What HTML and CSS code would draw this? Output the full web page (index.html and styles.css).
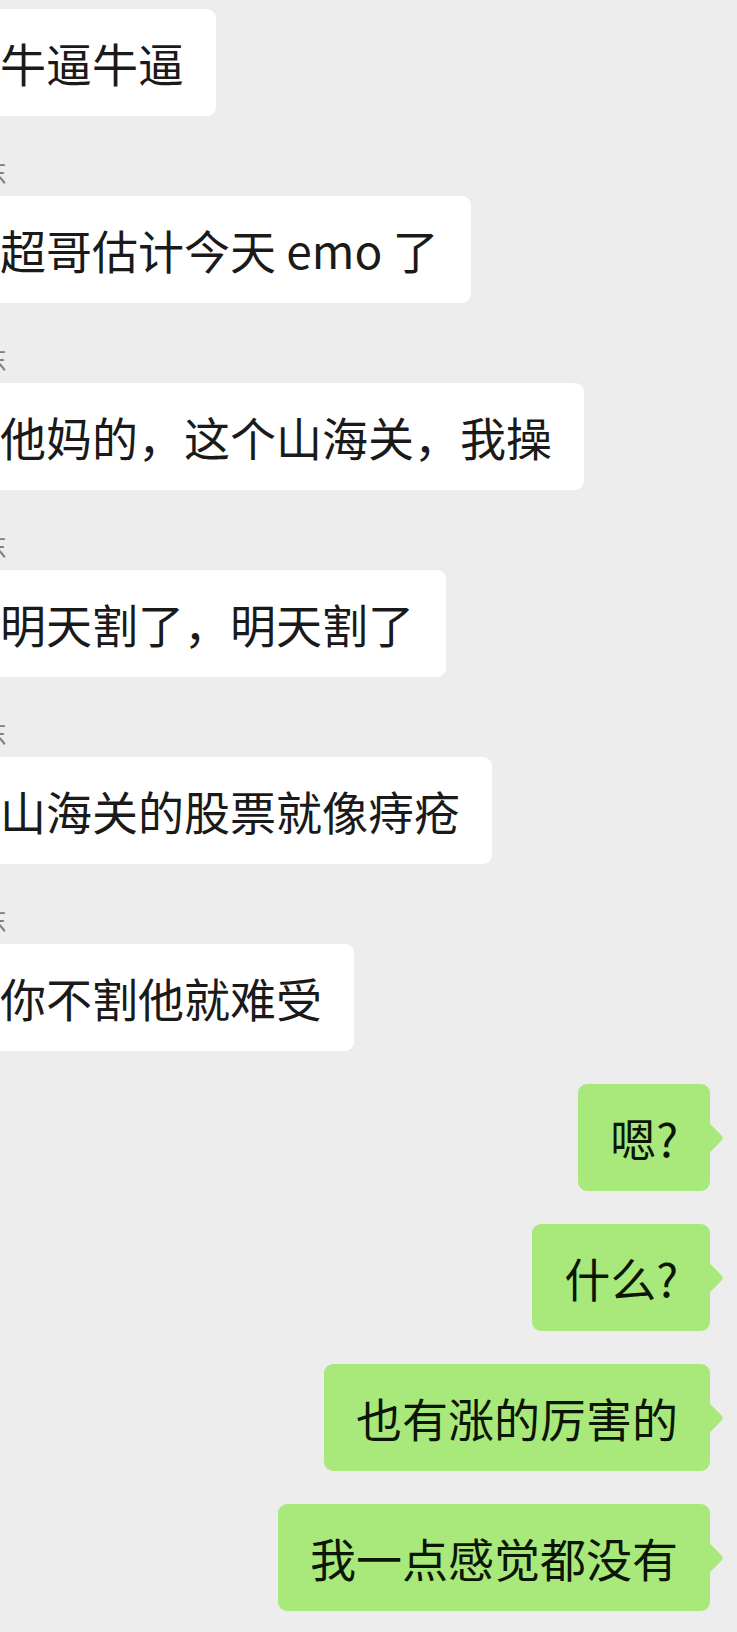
FILE: index.html
```html
<!DOCTYPE html>
<html lang="zh">
<head>
<meta charset="utf-8">
<title>聊天</title>
<link rel="stylesheet" href="styles.css">
</head>
<body>
<main class="chat">
  <div class="msg msg-in first">
    <div class="bubble bubble-in">牛逼牛逼</div>
  </div>
  <div class="msg msg-in">
    <div class="name">东</div>
    <div class="bubble bubble-in">超哥估计今天 emo 了</div>
  </div>
  <div class="msg msg-in">
    <div class="name">东</div>
    <div class="bubble bubble-in">他妈的，这个山海关，我操</div>
  </div>
  <div class="msg msg-in">
    <div class="name">东</div>
    <div class="bubble bubble-in">明天割了，明天割了</div>
  </div>
  <div class="msg msg-in">
    <div class="name">东</div>
    <div class="bubble bubble-in">山海关的股票就像痔疮</div>
  </div>
  <div class="msg msg-in">
    <div class="name">东</div>
    <div class="bubble bubble-in">你不割他就难受</div>
  </div>
  <div class="outgoing">
    <div class="bubble bubble-out">嗯?</div>
    <div class="bubble bubble-out">什么?</div>
    <div class="bubble bubble-out">也有涨的厉害的</div>
    <div class="bubble bubble-out">我一点感觉都没有</div>
  </div>
</main>
</body>
</html>
```

FILE: styles.css
```css
html, body {
  margin: 0;
  padding: 0;
  background: #ededed;
}

body {
  width: 737px;
  height: 1632px;
  overflow: hidden;
  font-family: "Noto Sans CJK SC", "Noto Sans", sans-serif;
}

.chat {
  padding-top: 9px;
  display: flex;
  flex-direction: column;
}

.msg-in {
  display: flex;
  flex-direction: column;
  align-items: flex-start;
  margin-top: 41px;
}

.msg-in.first {
  margin-top: 0;
}

.name {
  font-size: 26px;
  line-height: 30px;
  height: 30px;
  color: #808080;
  margin-left: -19px;
  margin-bottom: 9px;
}

.bubble {
  font-size: 46px;
  line-height: 47px;
  padding: 30px 32px;
  border-radius: 9px;
  white-space: nowrap;
  position: relative;
}

.bubble-in {
  background: #ffffff;
  color: #1a1a1a;
  margin-left: -32px;
}

.outgoing {
  display: flex;
  flex-direction: column;
  align-items: flex-end;
  gap: 33px;
  margin-top: 33px;
  padding-right: 27px;
}

.bubble-out {
  background: #a9e87b;
  color: #0c1606;
}

.bubble-out::after {
  content: "";
  position: absolute;
  top: 50%;
  right: -10px;
  width: 20px;
  height: 20px;
  margin-top: -10px;
  background: #a9e87b;
  transform: rotate(45deg);
  border-top-right-radius: 4px;
}
```
